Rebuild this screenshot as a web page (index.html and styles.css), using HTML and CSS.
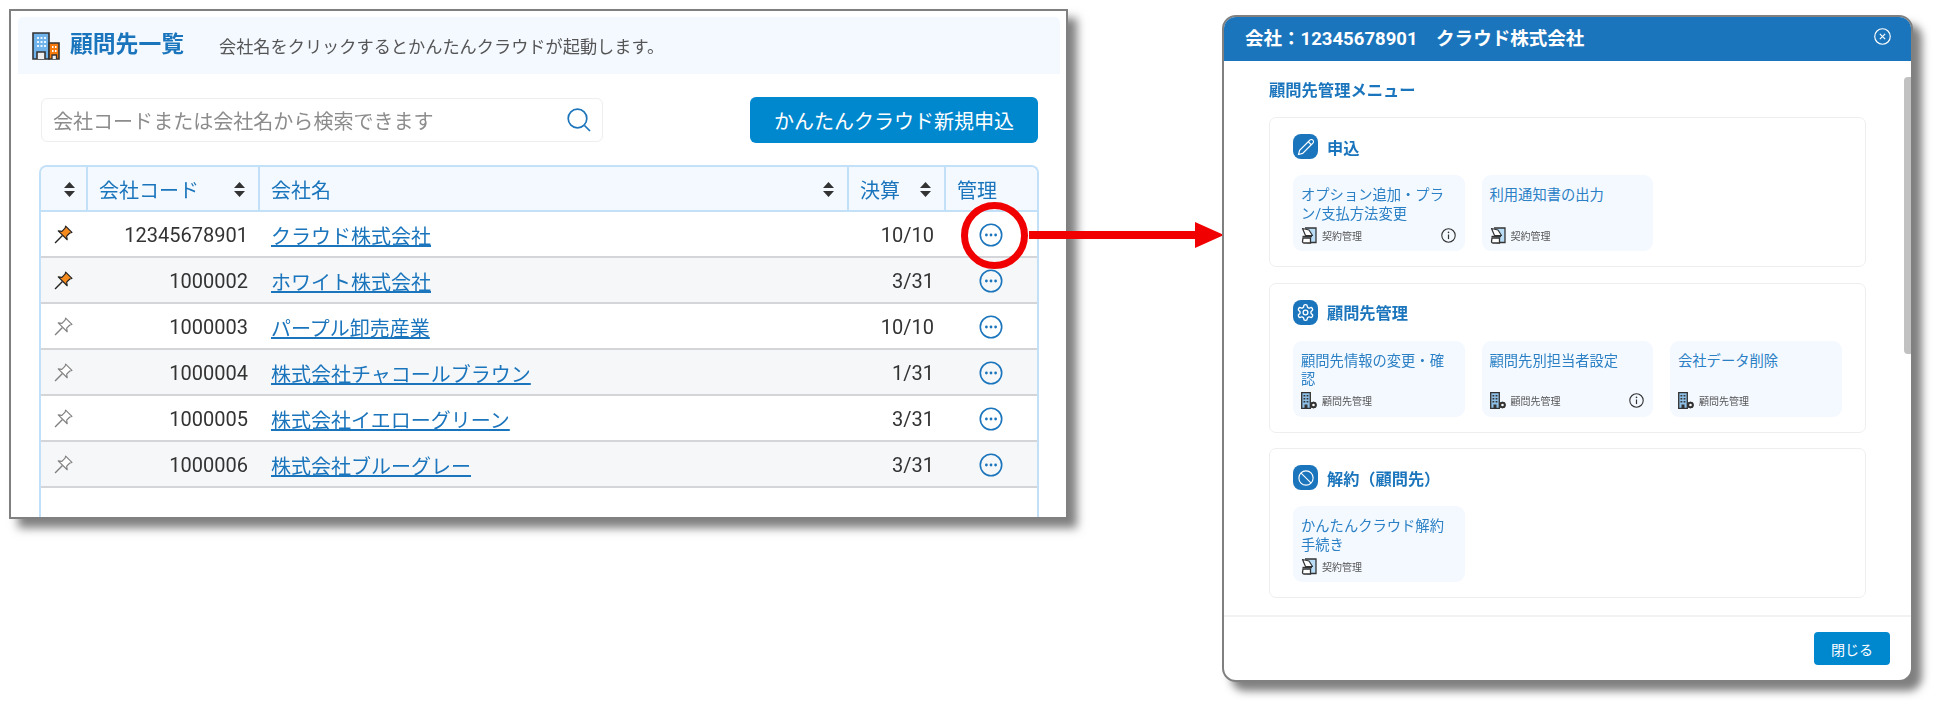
FILE: index.html
```html
<!DOCTYPE html>
<html lang="ja">
<head>
<meta charset="utf-8">
<title>顧問先一覧</title>
<link rel="stylesheet" href="styles.css">
</head>
<body>
<svg class="defs" aria-hidden="true">
  <symbol id="sort" viewBox="0 0 11 15"><path d="M5.5 0 11 6H0zM0 9h11l-5.5 6z"/></symbol>
  <symbol id="more" viewBox="0 0 24 24"><circle cx="12" cy="12" r="10.7" fill="none" stroke="currentColor" stroke-width="1.6"/><circle cx="7.4" cy="12" r="1.4" fill="currentColor"/><circle cx="12" cy="12" r="1.4" fill="currentColor"/><circle cx="16.6" cy="12" r="1.4" fill="currentColor"/></symbol>
  <symbol id="pin" viewBox="0 0 18 18"><path d="M8 10 1 17" fill="none" stroke="currentColor" stroke-width="1.3"/><path d="M11 1l6 6-2 .6-3 3 .5 3.4L4 5.5l3.5.5 3-3z" stroke="currentColor" stroke-width="1.1" stroke-linejoin="round"/></symbol>
  <symbol id="info" viewBox="0 0 15 15"><circle cx="7.5" cy="7.5" r="6.7" fill="none" stroke="#333" stroke-width="1.1"/><path d="M7.5 6.5v4.6" stroke="#333" stroke-width="1.2"/><circle cx="7.5" cy="4.4" r=".8" fill="#333"/></symbol>
  <symbol id="contract" viewBox="0 0 16 17"><path d="M4 1h11v14.5H6" fill="#b9dcf7" stroke="#333" stroke-width="1.3"/><path d="M1.5 1.5 8 3l3.5 5.5H4.5z" fill="#fff" stroke="#333" stroke-width="1.2" stroke-linejoin="round"/><path d="M1.5 9.5h9.5" stroke="#333" stroke-width="1.4"/><path d="M2 11h7.500v5H3a1.500 1.500 0 0 1-1.500-1.500z" fill="#fff" stroke="#333" stroke-width="1.3"/></symbol>
  <symbol id="bldg" viewBox="0 0 16 17"><path d="M.7.7h8.600v15.600H.7z" fill="#8fc0e8" stroke="#333" stroke-width="1.300"/><path d="M2.500 3h1.800v1.500H2.500zM5.600 3h1.800v1.500H5.600zM2.500 6h1.800v1.500H2.500zM5.600 6h1.800v1.500H5.600zM2.500 9h1.800v1.500H2.500zM5.600 9h1.800v1.500H5.600zM3.500 12.500h3v4h-3z" fill="#333"/><circle cx="12.500" cy="13" r="2.300" fill="#fff" stroke="#333" stroke-width="2"/><path d="M12.500 9.700v1M12.500 15.300v1M9.200 13h1M14.800 13h1M10.200 10.700l.7.700M14.100 14.600l.7.700M10.200 15.300l.7-.7M14.100 11.400l.7-.7" stroke="#333" stroke-width="1.200"/></symbol>
</svg>

<section class="window list-window">
  <header class="band">
    <svg class="band-icon" viewBox="0 0 28 28" aria-hidden="true">
      <path d="M1 1h16v26H1z" fill="#6fb3ea" stroke="#333" stroke-width="1.600"/>
      <path d="M5 5h2v2H5zM8.500 5h2v2h-2zM12 5h2v2h-2zM5 9h2v2H5zM8.500 9h2v2h-2zM12 9h2v2h-2zM5 13h2v2H5zM8.500 13h2v2h-2zM12 13h2v2h-2z" fill="#e8f4fe"/>
      <path d="M5 27v-7h8v7" fill="#eee" stroke="#333" stroke-width="1.600"/>
      <path d="M17 11h10v16H17z" fill="#f47a0e" stroke="#333" stroke-width="1.600"/>
      <path d="M20 14h1.500v2H20zM23 14h1.500v2H23zM20 18h1.500v2H20zM23 18h1.500v2H23z" fill="#fff"/>
      <path d="M20 27v-4h4.500v4" fill="#eee" stroke="#333" stroke-width="1.300"/>
    </svg>
    <h1 class="band-title">顧問先一覧</h1>
    <p class="band-desc">会社名をクリックするとかんたんクラウドが起動します。</p>
  </header>

  <div class="toolbar">
    <label class="search">
      <span class="search-text">会社コードまたは会社名から検索できます</span>
      <svg class="search-icon" viewBox="0 0 24 24" aria-hidden="true"><circle cx="10.500" cy="10.500" r="9.300"/><path d="m17.500 17.500 5.500 5.500"/></svg>
    </label>
    <button class="primary new-btn" type="button">かんたんクラウド新規申込</button>
  </div>

  <div class="table-wrap">
    <table class="clients">
      <colgroup><col class="c1"><col class="c2"><col class="c3"><col class="c4"><col class="c5"></colgroup>
      <thead>
        <tr>
          <th><span class="th-in end"><svg class="sort"><use href="#sort"/></svg></span></th>
          <th><span class="th-in">会社コード<svg class="sort"><use href="#sort"/></svg></span></th>
          <th><span class="th-in">会社名<svg class="sort"><use href="#sort"/></svg></span></th>
          <th><span class="th-in">決算<svg class="sort"><use href="#sort"/></svg></span></th>
          <th><span class="th-in">管理</span></th>
        </tr>
      </thead>
      <tbody>
        <tr><td class="pin-cell"><svg class="pin on"><use href="#pin"/></svg></td><td class="num">12345678901</td><td><a href="#">クラウド株式会社</a></td><td class="num">10/10</td><td class="act"><svg class="more"><use href="#more"/></svg></td></tr>
        <tr><td class="pin-cell"><svg class="pin on"><use href="#pin"/></svg></td><td class="num">1000002</td><td><a href="#">ホワイト株式会社</a></td><td class="num">3/31</td><td class="act"><svg class="more"><use href="#more"/></svg></td></tr>
        <tr><td class="pin-cell"><svg class="pin"><use href="#pin"/></svg></td><td class="num">1000003</td><td><a href="#">パープル卸売産業</a></td><td class="num">10/10</td><td class="act"><svg class="more"><use href="#more"/></svg></td></tr>
        <tr><td class="pin-cell"><svg class="pin"><use href="#pin"/></svg></td><td class="num">1000004</td><td><a href="#">株式会社チャコールブラウン</a></td><td class="num">1/31</td><td class="act"><svg class="more"><use href="#more"/></svg></td></tr>
        <tr><td class="pin-cell"><svg class="pin"><use href="#pin"/></svg></td><td class="num">1000005</td><td><a href="#">株式会社イエローグリーン</a></td><td class="num">3/31</td><td class="act"><svg class="more"><use href="#more"/></svg></td></tr>
        <tr><td class="pin-cell"><svg class="pin"><use href="#pin"/></svg></td><td class="num">1000006</td><td><a href="#">株式会社ブルーグレー</a></td><td class="num">3/31</td><td class="act"><svg class="more"><use href="#more"/></svg></td></tr>
      </tbody>
    </table>
  </div>
</section>

<div class="callout-ring"></div>
<svg class="callout-arrow" viewBox="0 0 195 26" aria-hidden="true"><path d="M0 9h166V0l29 13-29 13v-9H0z"/></svg>

<section class="window modal">
  <header class="modal-head">
    <h2 class="modal-title">会社：12345678901　クラウド株式会社</h2>
    <svg class="close" viewBox="0 0 16 16" aria-hidden="true"><circle cx="8" cy="8" r="7.300"/><path d="m5.500 5.500 5 5m0-5-5 5"/></svg>
  </header>
  <div class="modal-body">
    <h3 class="menu-title">顧問先管理メニュー</h3>

    <section class="group">
      <div class="group-head">
        <span class="group-icon"><svg viewBox="0 0 24 24"><path d="M17 3a2.850 2.830 0 1 1 4 4L7.500 20.500 2 22l1.500-5.500Z"/><path d="m15 5 4 4"/></svg></span>
        <h4 class="group-title">申込</h4>
      </div>
      <div class="tiles">
        <a class="tile" href="#"><span class="tile-text">オプション追加・プラン/支払方法変更</span><span class="tile-foot"><svg class="tile-icon"><use href="#contract"/></svg>契約管理<svg class="info"><use href="#info"/></svg></span></a>
        <a class="tile" href="#"><span class="tile-text">利用通知書の出力</span><span class="tile-foot"><svg class="tile-icon"><use href="#contract"/></svg>契約管理</span></a>
      </div>
    </section>

    <section class="group">
      <div class="group-head">
        <span class="group-icon"><svg class="gear" viewBox="0 0 24 24"><path d="M12.220 2h-.44a2 2 0 0 0-2 2v.18a2 2 0 0 1-1 1.730l-.43.25a2 2 0 0 1-2 0l-.15-.08a2 2 0 0 0-2.730.73l-.22.38a2 2 0 0 0 .73 2.730l.15.1a2 2 0 0 1 1 1.720v.51a2 2 0 0 1-1 1.740l-.15.09a2 2 0 0 0-.73 2.730l.22.38a2 2 0 0 0 2.730.73l.15-.08a2 2 0 0 1 2 0l.43.25a2 2 0 0 1 1 1.730V20a2 2 0 0 0 2 2h.44a2 2 0 0 0 2-2v-.18a2 2 0 0 1 1-1.730l.43-.25a2 2 0 0 1 2 0l.15.08a2 2 0 0 0 2.730-.73l.22-.39a2 2 0 0 0-.73-2.730l-.15-.08a2 2 0 0 1-1-1.740v-.5a2 2 0 0 1 1-1.740l.15-.09a2 2 0 0 0 .73-2.730l-.22-.38a2 2 0 0 0-2.730-.73l-.15.08a2 2 0 0 1-2 0l-.43-.25a2 2 0 0 1-1-1.730V4a2 2 0 0 0-2-2z"/><circle cx="12" cy="12" r="3"/></svg></span>
        <h4 class="group-title">顧問先管理</h4>
      </div>
      <div class="tiles">
        <a class="tile" href="#"><span class="tile-text">顧問先情報の変更・確認</span><span class="tile-foot"><svg class="tile-icon"><use href="#bldg"/></svg>顧問先管理</span></a>
        <a class="tile" href="#"><span class="tile-text">顧問先別担当者設定</span><span class="tile-foot"><svg class="tile-icon"><use href="#bldg"/></svg>顧問先管理<svg class="info"><use href="#info"/></svg></span></a>
        <a class="tile" href="#"><span class="tile-text">会社データ削除</span><span class="tile-foot"><svg class="tile-icon"><use href="#bldg"/></svg>顧問先管理</span></a>
      </div>
    </section>

    <section class="group">
      <div class="group-head">
        <span class="group-icon"><svg viewBox="0 0 24 24"><circle cx="12" cy="12" r="9.500"/><path d="m5.500 5.500 13 13"/></svg></span>
        <h4 class="group-title">解約（顧問先）</h4>
      </div>
      <div class="tiles">
        <a class="tile" href="#"><span class="tile-text">かんたんクラウド解約手続き</span><span class="tile-foot"><svg class="tile-icon"><use href="#contract"/></svg>契約管理</span></a>
      </div>
    </section>

    <div class="scroll-thumb"></div>
  </div>
  <footer class="modal-foot"><button class="primary close-btn" type="button">閉じる</button></footer>
</section>
</body>
</html>
```

FILE: styles.css
```css
* { box-sizing: border-box; }

html, body { margin: 0; padding: 0; }

body {
  position: relative;
  width: 1942px;
  height: 712px;
  overflow: hidden;
  background: #fff;
  color: #333;
  font-family: Roboto, "Noto Sans CJK JP", sans-serif;
}

h1, h2, h3, h4, p { margin: 0; }

.defs { position: absolute; width: 0; height: 0; }

.window {
  position: absolute;
  background: #fff;
  border: 2px solid #808080;
  box-shadow: 9px 9px 9px rgba(0, 0, 0, .5);
  overflow: hidden;
  filter: blur(.35px);
}

/* ---------- list window ---------- */
.list-window {
  left: 9px;
  top: 9px;
  width: 1059px;
  height: 510px;
  padding: 6px 6px 0 7px;
}

.band {
  display: flex;
  align-items: center;
  height: 57px;
  padding: 0 0 0 14px;
  background: #f4f9ff;
  border-radius: 5px 5px 0 0;
}

.band-icon { width: 28px; height: 28px; flex: none; }

.band-title {
  margin-left: 10px;
  font-size: 22.800px;
  font-weight: 700;
  line-height: 1;
  color: #1b75bc;
}

.band-desc {
  margin-left: 35px;
  font-size: 17.200px;
  color: #555;
}

.toolbar {
  display: flex;
  justify-content: space-between;
  align-items: center;
  height: 46px;
  margin-top: 23px;
  padding: 0 22px 0 23px;
}

.search {
  display: flex;
  align-items: center;
  justify-content: space-between;
  width: 562px;
  height: 44px;
  padding: 0 11px;
  border: 1px solid #eee;
  border-radius: 6px;
}

.search-text { font-size: 20.050px; color: #8c8c8c; }

.search-icon {
  width: 24px;
  height: 24px;
  fill: none;
  stroke: #1b75bc;
  stroke-width: 1.700;
}

.primary {
  border: 0;
  color: #fff;
  background: #0088cf;
  font-family: inherit;
}

.new-btn {
  width: 288px;
  height: 46px;
  font-size: 20px;
  border-radius: 6px;
}

.table-wrap {
  width: 1000px;
  height: 400px;
  margin: 22px 0 0 21px;
  border: 2px solid #c3e0f9;
  border-bottom: 0;
  border-radius: 8px 8px 0 0;
  overflow: hidden;
}

.clients {
  width: 996px;
  table-layout: fixed;
  border-collapse: separate;
  border-spacing: 0;
  font-size: 20px;
}

.c1 { width: 47px; }
.c2 { width: 172px; }
.c3 { width: 589px; }
.c4 { width: 97px; }
.c5 { width: 91px; }

.clients th {
  height: 45px;
  padding: 1px 13px 0 11px;
  background: #f4f9ff;
  border-right: 2px solid #c3e0f9;
  border-bottom: 2px solid #c3e0f9;
  font-weight: 400;
  text-align: left;
  color: #1b75bc;
}

.clients th:first-child { padding: 1px 11px 0 0; }
.clients th:last-child { border-right: 0; }

.th-in {
  display: flex;
  align-items: center;
  justify-content: space-between;
}

.th-in.end { justify-content: flex-end; }

.sort { width: 11px; height: 15px; flex: none; fill: #333; }

.clients td {
  height: 46px;
  padding: 2px 12px 0 11px;
  border-bottom: 2px solid #d3d5d8;
  white-space: nowrap;
}

.clients tbody tr:nth-child(even) td { background: #f6f7f9; }

.clients td.num { text-align: right; color: #333; }

.clients a { color: #1b75bc; }

.clients td.pin-cell { padding: 1px 0 0 13px; }
.clients td.act { padding: 1px 0 0 33px; }

.pin {
  display: block;
  width: 19px;
  height: 19px;
  color: #808080;
  fill: #fff;
}

.pin.on { color: #222; fill: #f58a1f; }

.more {
  display: block;
  width: 24px;
  height: 24px;
  color: #1b75bc;
}

/* ---------- callout ---------- */
.callout-ring {
  position: absolute;
  left: 961px;
  top: 202px;
  width: 67px;
  height: 67px;
  border: 7px solid #f00000;
  border-radius: 50%;
}

.callout-arrow {
  position: absolute;
  left: 1029px;
  top: 222px;
  width: 195px;
  height: 26px;
  fill: #f00000;
}

/* ---------- modal ---------- */
.modal {
  left: 1222px;
  top: 15px;
  width: 691px;
  height: 667px;
  border-radius: 14px;
  display: flex;
  flex-direction: column;
}

.modal-head {
  display: flex;
  align-items: center;
  justify-content: space-between;
  flex: none;
  height: 44px;
  padding: 0 20px 0 21px;
  background: #1b75bc;
  color: #fff;
}

.modal-title { font-size: 18.550px; font-weight: 700; line-height: 1; }

.close {
  width: 17px;
  height: 17px;
  margin-top: -6px;
  fill: none;
  stroke: #fff;
  stroke-width: 1.100;
}

.modal-body {
  position: relative;
  flex: 1;
  min-height: 0;
  padding: 20px 0 0 45px;
  overflow: hidden;
  border-bottom: 2px solid #f2f2f2;
}

.menu-title {
  height: 36px;
  font-size: 16.300px;
  line-height: 20px;
  font-weight: 700;
  color: #1b75bc;
}

.group {
  width: 597px;
  height: 150px;
  margin-bottom: 15.500px;
  padding: 16px 23px;
  border: 1px solid #eee;
  border-radius: 7px;
}

.group-head {
  display: flex;
  align-items: center;
  gap: 9px;
  height: 25px;
}

.group-icon {
  display: flex;
  align-items: center;
  justify-content: center;
  width: 25px;
  height: 25px;
  border-radius: 8px;
  background: #1b75bc;
}

.group-icon svg {
  width: 18px;
  height: 18px;
  fill: none;
  stroke: #fff;
  stroke-width: 1.500;
}

.group-icon svg.gear { stroke-width: 1.700; width: 19px; height: 19px; }

.group-title {
  font-size: 16.200px;
  font-weight: 700;
  color: #1b75bc;
}

.tiles {
  display: grid;
  grid-template-columns: repeat(3, 171.500px);
  gap: 17px;
  margin-top: 16px;
}

.tile {
  display: flex;
  flex-direction: column;
  justify-content: space-between;
  height: 76px;
  padding: 11px 9px 8px 8px;
  border-radius: 9px;
  background: #f4f9ff;
  text-decoration: none;
}

.tile-text {
  padding-right: 6px;
  font-size: 14.300px;
  line-height: 18.500px;
  color: #2b80c5;
}

.tile-foot {
  display: flex;
  align-items: center;
  height: 16px;
  font-size: 10px;
  color: #555;
}

.tile-icon { width: 16px; height: 17px; margin-right: 5px; flex: none; }

.info { width: 15px; height: 15px; margin-left: auto; flex: none; }

.scroll-thumb {
  position: absolute;
  right: 0;
  top: 16px;
  width: 7px;
  height: 277px;
  background: #c1c1c1;
  border-radius: 4px 0 0 4px;
}

.modal-foot {
  display: flex;
  justify-content: flex-end;
  align-items: flex-start;
  flex: none;
  height: 63px;
  padding: 15px 21px 0 0;
}

.close-btn {
  width: 76px;
  height: 33px;
  font-size: 14px;
  border-radius: 4px;
}
```
